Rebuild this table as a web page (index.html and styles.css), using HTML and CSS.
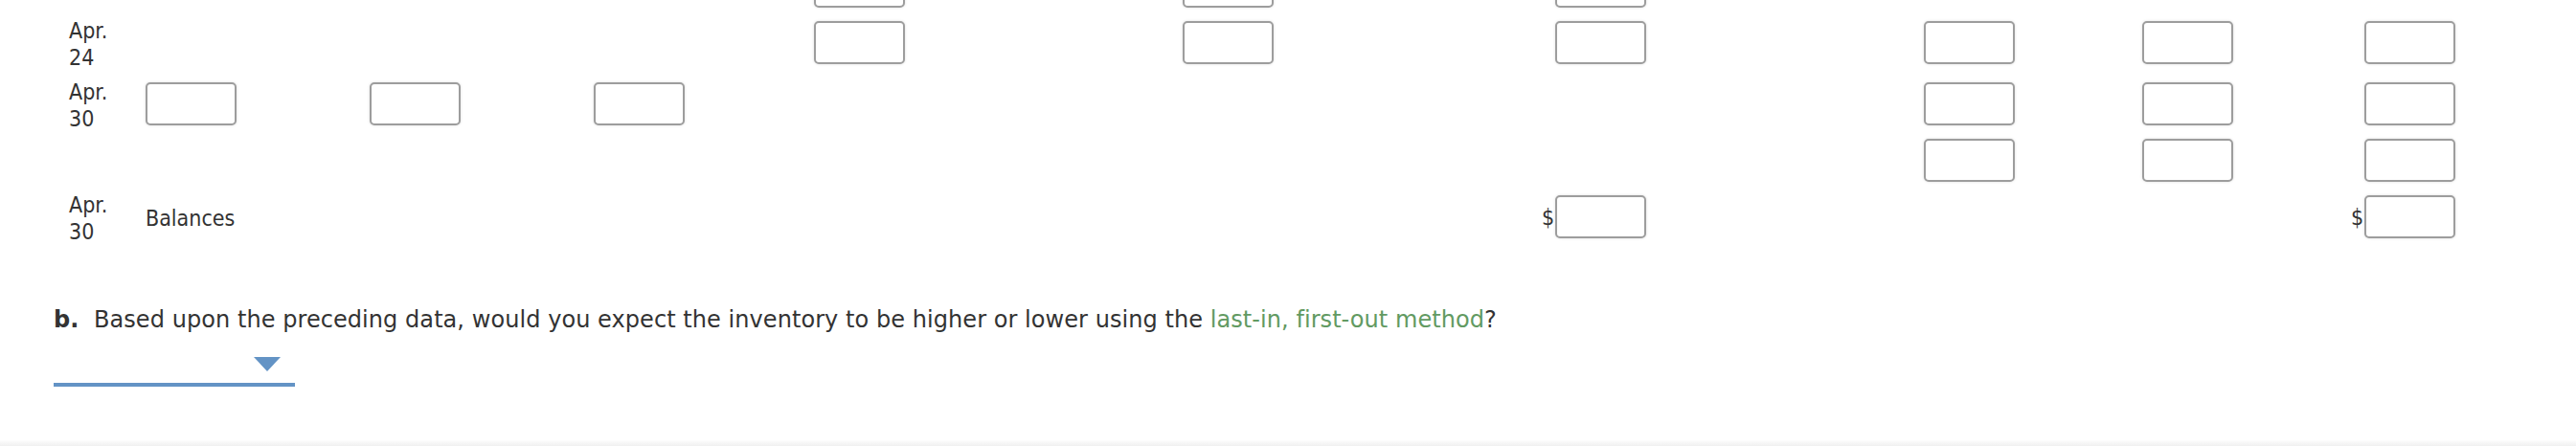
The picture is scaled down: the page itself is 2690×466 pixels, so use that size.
FILE: index.html
```html
<!DOCTYPE html>
<html lang="en">
<head>
<meta charset="utf-8">
<title>Inventory record</title>
<link rel="stylesheet" href="styles.css">
</head>
<body>
<div class="page">
  <div class="ledger">
    <div class="row row-plain">
      <div class="cell col-d"><input class="box" type="text" aria-label="entry"></div>
      <div class="cell col-e"><input class="box" type="text" aria-label="entry"></div>
      <div class="cell col-f"><input class="box" type="text" aria-label="entry"></div>
    </div>
    <div class="row row-text">
      <div class="cell date">Apr.<br>24</div>
      <div class="cell col-d"><input class="box" type="text" aria-label="entry"></div>
      <div class="cell col-e"><input class="box" type="text" aria-label="entry"></div>
      <div class="cell col-f"><input class="box" type="text" aria-label="entry"></div>
      <div class="cell col-g"><input class="box" type="text" aria-label="entry"></div>
      <div class="cell col-h"><input class="box" type="text" aria-label="entry"></div>
      <div class="cell col-i"><input class="box" type="text" aria-label="entry"></div>
    </div>
    <div class="row row-text">
      <div class="cell date">Apr.<br>30</div>
      <div class="cell col-a"><input class="box" type="text" aria-label="entry"></div>
      <div class="cell col-b"><input class="box" type="text" aria-label="entry"></div>
      <div class="cell col-c"><input class="box" type="text" aria-label="entry"></div>
      <div class="cell col-g"><input class="box" type="text" aria-label="entry"></div>
      <div class="cell col-h"><input class="box" type="text" aria-label="entry"></div>
      <div class="cell col-i"><input class="box" type="text" aria-label="entry"></div>
    </div>
    <div class="row row-plain">
      <div class="cell col-g"><input class="box" type="text" aria-label="entry"></div>
      <div class="cell col-h"><input class="box" type="text" aria-label="entry"></div>
      <div class="cell col-i"><input class="box" type="text" aria-label="entry"></div>
    </div>
    <div class="row row-text">
      <div class="cell date">Apr.<br>30</div>
      <div class="cell col-a label">Balances</div>
      <div class="cell col-f"><span class="dollar">$</span><input class="box" type="text" aria-label="balance cost"></div>
      <div class="cell col-i"><span class="dollar">$</span><input class="box" type="text" aria-label="balance total"></div>
    </div>
  </div>

  <p class="question"><span class="part">b.</span>Based upon the preceding data, would you expect the inventory to be higher or lower using the <span class="term">last-in, first-out method</span>?</p>

  <div class="select" role="combobox" aria-label="higher or lower"><span class="caret"></span></div>

  <div class="footer-band"></div>
</div>
</body>
</html>
```

FILE: styles.css
```css
* {
  box-sizing: border-box;
}

html,
body {
  margin: 0;
  padding: 0;
  background: #ffffff;
}

body {
  width: 2690px;
  height: 466px;
  overflow: hidden;
  color: #333333;
}

.page {
  display: flex;
  flex-direction: column;
  height: 466px;
}

.ledger {
  margin-top: -40px;
  padding-left: 72px;
  font-family: "DejaVu Sans Condensed", "DejaVu Sans", sans-serif;
  font-size: 23px;
  line-height: 28px;
  color: #333333;
}

.row {
  display: grid;
  grid-template-columns: 80px 234px 234px 230px 385px 389px 385px 228px 232px 221px;
  align-items: center;
}

.row-text {
  height: 64px;
}

.row-plain {
  height: 54px;
}

.cell {
  display: flex;
  align-items: center;
}

.date {
  grid-column: 1;
  display: block;
}

.col-a { grid-column: 2; }
.col-b { grid-column: 3; }
.col-c { grid-column: 4; }
.col-d { grid-column: 5; }
.col-e { grid-column: 6; }
.col-f { grid-column: 7; }
.col-g { grid-column: 8; }
.col-h { grid-column: 9; }
.col-i { grid-column: 10; }

.label {
  white-space: nowrap;
}

.box {
  display: block;
  width: 95px;
  height: 45px;
  margin: 0 0 4px 0;
  padding: 0;
  border: 2px solid #9d9d9d;
  border-radius: 5px;
  background: #ffffff;
  box-shadow: 0 0 3px rgba(0, 0, 0, 0.14);
  font: inherit;
  outline: none;
}

.dollar {
  width: 14px;
  margin-left: -14px;
  margin-bottom: 2px;
  text-align: left;
}

.question {
  margin: 56px 0 0 56px;
  font-family: "DejaVu Sans", sans-serif;
  font-size: 24px;
  line-height: 36px;
  letter-spacing: 0.06px;
  color: #333333;
  white-space: nowrap;
}

.part {
  display: inline-block;
  width: 42px;
  font-weight: bold;
}

.term {
  color: #629a62;
}

.select {
  display: flex;
  justify-content: flex-end;
  align-items: flex-start;
  width: 252px;
  height: 48px;
  margin: 4px 0 0 56px;
  padding: 17px 15px 0 0;
  border-bottom: 4px solid #6393c5;
}

.caret {
  width: 0;
  height: 0;
  border-left: 14.5px solid transparent;
  border-right: 14.5px solid transparent;
  border-top: 15px solid #6393c5;
}

.footer-band {
  margin-top: auto;
  height: 6px;
  background: linear-gradient(to bottom, #fdfdfd, #f0f0f0);
}
```
